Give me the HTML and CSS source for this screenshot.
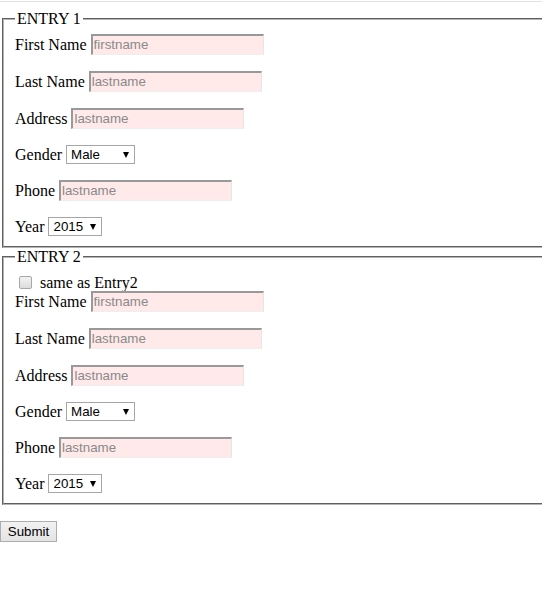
FILE: index.html
```html
<!DOCTYPE html>
<html>
<head>
<meta charset="utf-8">
<link rel="stylesheet" href="styles.css">
</head>
<body>
<div class="topline"></div>
<form class="form">
  <fieldset class="entry">
    <legend class="legend">ENTRY 1</legend>
    <div class="row"><label class="lbl">First Name</label><input class="txt" type="text" placeholder="firstname"></div>
    <div class="row"><label class="lbl">Last Name</label><input class="txt" type="text" placeholder="lastname"></div>
    <div class="row"><label class="lbl">Address</label><input class="txt" type="text" placeholder="lastname"></div>
    <div class="row"><label class="lbl">Gender</label><span class="sel sel-gender"><select class="selbox"><option>Male</option><option>Female</option></select></span></div>
    <div class="row"><label class="lbl">Phone</label><input class="txt" type="text" placeholder="lastname"></div>
    <div class="row"><label class="lbl">Year</label><span class="sel sel-year"><select class="selbox"><option>2015</option><option>2016</option></select></span></div>
  </fieldset>
  <fieldset class="entry">
    <legend class="legend">ENTRY 2</legend>
    <div class="checkrow"><input class="chk" type="checkbox"><span class="chklbl">same as Entry2</span></div>
    <div class="row"><label class="lbl">First Name</label><input class="txt" type="text" placeholder="firstname"></div>
    <div class="row"><label class="lbl">Last Name</label><input class="txt" type="text" placeholder="lastname"></div>
    <div class="row"><label class="lbl">Address</label><input class="txt" type="text" placeholder="lastname"></div>
    <div class="row"><label class="lbl">Gender</label><span class="sel sel-gender"><select class="selbox"><option>Male</option><option>Female</option></select></span></div>
    <div class="row"><label class="lbl">Phone</label><input class="txt" type="text" placeholder="lastname"></div>
    <div class="row"><label class="lbl">Year</label><span class="sel sel-year"><select class="selbox"><option>2015</option><option>2016</option></select></span></div>
  </fieldset>
  <button class="submit" type="button">Submit</button>
</form>
</body>
</html>
```

FILE: styles.css
```css
html, body {
  margin: 0;
  padding: 0;
  overflow: hidden;
  background: #fff;
}
body {
  font-family: "Liberation Serif", "Times New Roman", serif;
  font-size: 16px;
  color: #000;
}
.topline {
  margin-top: 1px;
  height: 1px;
  background: #e2e2e2;
}
.form {
  margin: 0;
}
.entry {
  margin: 8px -20px 0 2px;
  padding: 6px 11px 10px 11px;
  border: 2px groove #b4b4b4;
  display: flex;
  flex-direction: column;
  gap: 16px;
}
.entry + .entry {
  margin-top: 0;
}
.legend {
  padding: 0 2px;
  line-height: 18px;
  height: 18px;
}
.row {
  display: flex;
  align-items: center;
  gap: 4px;
  line-height: 18px;
}
.lbl {
  white-space: nowrap;
}
.txt {
  box-sizing: border-box;
  width: 173px;
  height: 21px;
  margin: 0;
  padding: 0 1px 1px 1px;
  background: #ffe9e9;
  border-style: solid;
  border-width: 2px 1px 1px 2px;
  border-color: #999 #e6e6e6 #eee #999;
  font-family: "Liberation Sans", Arial, sans-serif;
  font-size: 13.33px;
  color: #000;
  outline: none;
}
.txt::placeholder {
  color: #8a8a8a;
  opacity: 1;
}
.sel {
  position: relative;
  display: inline-block;
}
.sel::after {
  content: "";
  position: absolute;
  top: 7px;
  right: 6px;
  border-left: 3.5px solid transparent;
  border-right: 3.5px solid transparent;
  border-top: 6px solid #000;
  pointer-events: none;
}
.selbox {
  -webkit-appearance: none;
  appearance: none;
  box-sizing: border-box;
  height: 19px;
  margin: 0;
  padding: 0 0 0 4px;
  border: 1px solid #a6a6a6;
  border-radius: 0;
  background: #fff;
  font-family: "Liberation Sans", Arial, sans-serif;
  font-size: 13.33px;
  line-height: 17px;
  color: #000;
  outline: none;
}
.sel-gender .selbox {
  width: 69px;
}
.sel-year .selbox {
  width: 54px;
}
.checkrow {
  display: flex;
  align-items: center;
  height: 19px;
  margin-top: 1px;
  margin-bottom: -17px;
}
.chk {
  -webkit-appearance: none;
  appearance: none;
  box-sizing: border-box;
  width: 13px;
  height: 13px;
  margin: 0 5px 0 4px;
  border: 1px solid #a8a8a8;
  border-radius: 2px;
  background: linear-gradient(#f2f2f2, #dcdcdc);
}
.chklbl {
  margin-left: 3px;
}
.submit {
  display: block;
  box-sizing: border-box;
  margin: 16px 0 0 0;
  width: 57px;
  height: 21px;
  padding: 0;
  border: 1px solid #adadad;
  border-radius: 0;
  background: linear-gradient(#f2f2f2, #e4e4e4);
  font-family: "Liberation Sans", Arial, sans-serif;
  font-size: 13.33px;
  color: #000;
}
```
